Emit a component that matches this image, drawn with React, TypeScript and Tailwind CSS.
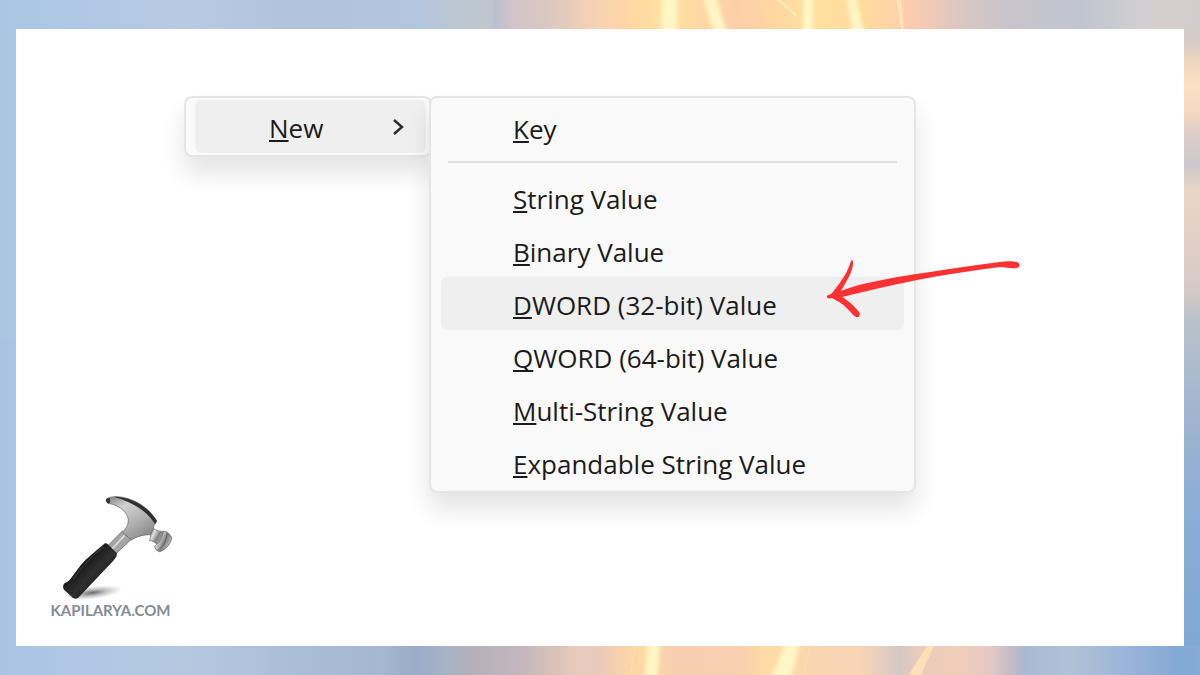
import { useState } from 'react'

type Stop = [number, string]

const TOP_STOPS: Stop[] = [
  [0, '#a9c7e3'], [80, '#b0c8e6'], [190, '#b7cae4'], [290, '#b1c2dd'], [420, '#b4c5de'],
  [450, '#bbc7d3'], [490, '#c0c6cf'], [495, '#b9bfd0'], [510, '#d0c3c8'], [560, '#e0c9bf'],
  [587, '#f3d0b5'], [600, '#f8d3b3'], [625, '#ffd5a5'], [660, '#ffe0a0'], [685, '#ffdca2'],
  [735, '#fdcfa9'], [770, '#ffd5a2'], [810, '#ffe0a0'], [860, '#ffdb9c'], [895, '#ffd3a8'],
  [910, '#fccbaf'], [930, '#f0cab8'], [970, '#d6c6c4'], [1010, '#c8c4cb'], [1080, '#bfc5cf'],
  [1130, '#cfcdd2'], [1170, '#d5cdcc'], [1200, '#d3cccd'],
]

const BOTTOM_STOPS: Stop[] = [
  [0, '#aac3e3'], [90, '#b1c7e5'], [180, '#b4c9e0'], [260, '#afc1dc'], [290, '#a9bed9'],
  [380, '#a5b7d1'], [415, '#9bacc8'], [445, '#a6b3c8'], [470, '#b4b0ba'], [520, '#c4b5bd'],
  [560, '#ddc4b8'], [575, '#e7cbbd'], [600, '#eac9bb'], [625, '#fad3a8'], [650, '#ffdca3'],
  [670, '#f7ceb0'], [740, '#f8d0af'], [770, '#ffdca5'], [810, '#fbd5b0'], [860, '#f9d4b6'],
  [900, '#d5c8c4'], [920, '#ecccbc'], [960, '#f1ccb9'], [990, '#e4c9c3'], [1010, '#c6bcc8'],
  [1025, '#a9b9d2'], [1070, '#b0c2d6'], [1130, '#9ab3d9'], [1180, '#83a9d5'], [1200, '#84acd7'],
]

const RIGHT_STOPS: Stop[] = [
  [0, '#d6ccc9'], [40, '#d5cbc8'], [60, '#ecd4bf'], [85, '#fde0c2'], [110, '#f5d8bf'],
  [140, '#d8cccb'], [165, '#ccc8cd'], [190, '#e8d5c6'], [230, '#e4d1c5'], [290, '#d6c9c6'],
  [320, '#bac1ca'], [380, '#a9b9cf'], [450, '#97b1d2'], [520, '#88aed7'], [640, '#7fa8d5'],
]

const VALUE_ITEMS = [
  'String Value',
  'Binary Value',
  'DWORD (32-bit) Value',
  'QWORD (64-bit) Value',
  'Multi-String Value',
  'Expandable String Value',
]

function Stops({ stops, length }: { stops: Stop[]; length: number }) {
  return (
    <>
      {stops.map(([at, color]) => (
        <stop key={at} offset={at / length} stopColor={color} />
      ))}
    </>
  )
}

function Wallpaper() {
  return (
    <svg
      className="absolute inset-0 h-full w-full"
      viewBox="0 0 1200 675"
      preserveAspectRatio="none"
      aria-hidden="true"
    >
      <defs>
        <linearGradient id="wallTop">
          <Stops stops={TOP_STOPS} length={1200} />
        </linearGradient>
        <linearGradient id="wallBottom">
          <Stops stops={BOTTOM_STOPS} length={1200} />
        </linearGradient>
        <linearGradient id="wallRight" gradientUnits="userSpaceOnUse" x1="0" y1="0" x2="0" y2="675">
          <Stops stops={RIGHT_STOPS} length={675} />
        </linearGradient>
        <filter id="glow" x="-50%" y="-50%" width="200%" height="200%">
          <feGaussianBlur stdDeviation="2" />
        </filter>
      </defs>
      <rect width="1200" height="338" fill="url(#wallTop)" />
      <rect y="337" width="1200" height="338" fill="url(#wallBottom)" />
      <rect x="1184" y="29" width="16" height="617" fill="url(#wallRight)" />

      {/* light streaks */}
      <g fill="#fff6c6" filter="url(#glow)">
        <path d="M663 -5h14v40h-16z" />
        <path d="M702 -5h13l13 40h-13z" />
        <path d="M804 -5h9v40h-10z" />
        <path d="M846 -5h9l10 40h-12z" />
        <path d="M648 640h12l-3 40h-12z" />
        <path d="M786 640h14l-9 40h-20z" />
      </g>
      <path d="M776 -2l20 17" stroke="#ffeebb" strokeWidth="2" />
      <path d="M896 -2l5 31h3l-3 -31z" fill="#ffe3bf" />
      <path d="M927 646h7l-14 30h-12z" fill="#ffdfba" />
      <path d="M635 646l-4 29M810 646l-6 29" stroke="#ffdfae" strokeWidth="1" />
    </svg>
  )
}

function MenuLabel({ text }: { text: string }) {
  return (
    <span className="pt-0.5">
      <span className="underline decoration-2 underline-offset-2 [text-decoration-skip-ink:none]">
        {text[0]}
      </span>
      {text.slice(1)}
    </span>
  )
}

function Arrow() {
  return (
    <svg
      className="pointer-events-none absolute -top-5 left-[384px] h-[64px] w-[200px]"
      viewBox="0 0 200 64"
      fill="#fb3133"
      aria-hidden="true"
    >
      <path d="M2 39C2 38 5 38 7 36C11 31 15 26 18 21C22 15 24 10 26 4C27 2 28 3 28 6C28 12 25 18 21 25L16 34C23 31 30 29 38 27C60 22 82 18 105 15C128 11 152 8 175 5C181 4 188 4 192 5C196 7 195 10 192 11C187 12 181 10 175 10C152 13 130 16 108 20C85 24 63 29 42 34L17 40C23 43 30 50 34 55C36 58 34 61 31 60C26 57 22 50 17 47C13 44 10 43 7 41C4 42 1 41 2 39Z" />
    </svg>
  )
}

function HammerLogo() {
  return (
    <svg className="h-[107px] w-[125px]" viewBox="54 45 375 321" aria-hidden="true">
      <defs>
        <linearGradient id="steel" x1="0" y1="0" x2="0.7" y2="1">
          <stop offset="0" stopColor="#777" />
          <stop offset="0.3" stopColor="#d2d2d2" />
          <stop offset="0.65" stopColor="#b2b2b2" />
          <stop offset="1" stopColor="#8a8a8a" />
        </linearGradient>
        <linearGradient id="face" x1="0" y1="0" x2="1" y2="0.6">
          <stop offset="0" stopColor="#444" />
          <stop offset="0.35" stopColor="#e4e4e4" />
          <stop offset="0.65" stopColor="#7d7d7d" />
          <stop offset="1" stopColor="#ccc" />
        </linearGradient>
        <linearGradient id="grip" x1="0" y1="0" x2="1" y2="1">
          <stop offset="0.3" stopColor="#111" />
          <stop offset="0.55" stopColor="#2f2f2f" />
          <stop offset="0.8" stopColor="#161616" />
        </linearGradient>
        <radialGradient id="ground" cx="0.4">
          <stop offset="0" stopColor="#444" stopOpacity="0.8" />
          <stop offset="1" stopColor="#999" stopOpacity="0" />
        </radialGradient>
      </defs>
      <ellipse cx="205" cy="336" rx="92" ry="20" transform="rotate(-7 205 336)" fill="url(#ground)" />
      {/* neck */}
      <path d="M277 153L304 178L258 221L235 196Z" fill="#a5a5a5" stroke="#555" strokeWidth="2" />
      <path d="M284 166L246 207" stroke="#ddd" strokeWidth="5" />
      {/* claw and head */}
      <path
        d="M229 57C240 49 263 48 284 53C326 64 358 86 380 124L371 138L370 153L362 164C342 164 323 168 304 180L277 156C291 143 299 128 293 110C285 90 263 75 235 70Z"
        fill="url(#steel)"
        stroke="#606060"
        strokeWidth="2"
      />
      <path d="M250 50C308 50 354 81 381 122L375 132C350 92 308 66 250 50Z" fill="#303030" />
      <path d="M229 56L240 54L240 68L234 71L227 63Z" fill="#333" />
      {/* striking face */}
      <path d="M370 145C381 153 391 155 402 154L382 194C374 186 366 182 359 182L363 162Z" fill="url(#face)" stroke="#666" strokeWidth="2" />
      <path d="M400 154C411 153 421 162 425 175C422 192 407 211 388 215C379 211 374 205 374 198C388 190 397 176 400 154Z" fill="url(#face)" stroke="#555" strokeWidth="2" />
      <path d="M411 159C410 183 401 200 382 211" fill="none" stroke="#555" strokeWidth="2" />
      {/* handle */}
      <path
        d="M225 190C230 188 235 193 239 198L260 219C262 229 256 235 250 242L147 351C142 357 135 357 129 354L103 330C98 325 98 313 105 309C114 306 119 301 125 292L151 257C174 231 196 215 225 190Z"
        fill="url(#grip)"
      />
      <path d="M222 201C190 222 157 258 130 298" fill="none" stroke="#555" strokeWidth="2" />
    </svg>
  )
}

export default function App() {
  const [selected, setSelected] = useState('DWORD (32-bit) Value')

  return (
    <div className="relative flex min-h-screen flex-col px-4 pt-[29px] pb-[29px] font-['Open_Sans','Noto_Sans',sans-serif] text-[#1b1b1b]">
      <Wallpaper />
      <main className="relative flex flex-1 flex-col justify-between bg-white pt-[67px] pr-8 pb-7 pl-8">
        <div className="flex items-start pl-[136px] text-[26px] leading-8">
          {/* Parent menu */}
          <div
            role="menu"
            className="w-[248px] shrink-0 rounded-lg border-2 border-[#e5e5e5] bg-[#fafafa] px-[9px] py-0.5 shadow-[0_16px_24px_rgba(0,0,0,0.11)]"
          >
            <button
              role="menuitem"
              aria-haspopup="menu"
              aria-expanded="true"
              className="flex h-[53px] w-[231px] items-center justify-between rounded-md bg-[#efefef] pr-[22px] pl-[74px]"
            >
              <MenuLabel text="New" />
              <svg className="h-4 w-3" viewBox="0 0 12 16" fill="none" stroke="#2b2b2b" strokeWidth="2.4" aria-hidden="true">
                <path d="M2 1l8 7-8 7" />
              </svg>
            </button>
          </div>

          {/* Submenu */}
          <div
            role="menu"
            className="relative -ml-[3px] w-[487px] shrink-0 rounded-lg border-2 border-[#e5e5e5] bg-[#f9f9f9] px-2.5 pt-[3px] pb-0.5 shadow-[0_16px_24px_rgba(0,0,0,0.11)]"
          >
            <button role="menuitem" className="flex h-[53px] w-full items-center pl-[72px]">
              <MenuLabel text="Key" />
            </button>
            <hr className="mx-[7px] mt-[7px] mb-2 border-t-2 border-[#e0e0e0]" />
            {VALUE_ITEMS.map((item) => (
              <div key={item} className="relative">
                <button
                  role="menuitem"
                  onClick={() => setSelected(item)}
                  className={`flex h-[53px] w-full items-center rounded-md pl-[72px] ${
                    item === selected ? 'bg-[#efefef]' : ''
                  }`}
                >
                  <MenuLabel text={item} />
                </button>
                {item === selected && <Arrow />}
              </div>
            ))}
          </div>
        </div>

        <a href="#" className="flex w-[125px] flex-col items-center">
          <HammerLogo />
          <span className="font-['Lato',sans-serif] text-[15px] leading-4 font-bold whitespace-nowrap text-[#868a94]">
            KAPILARYA.COM
          </span>
        </a>
      </main>
    </div>
  )
}
